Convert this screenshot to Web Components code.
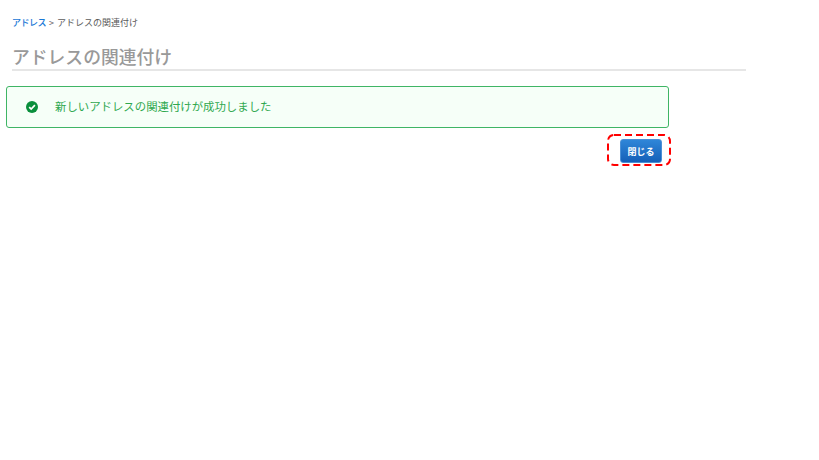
<!DOCTYPE html>
<html lang="ja">
<head>
<meta charset="utf-8">
<title>アドレスの関連付け</title>
<style>
    html, body { margin: 0; padding: 0; background: #fff; }
    body { font-family: "Noto Sans CJK JP", "Liberation Sans", sans-serif; }
</style>
</head>
<body>
<assoc-page>
    <page-crumbs current="アドレスの関連付け">アドレス</page-crumbs>
    <page-title>アドレスの関連付け</page-title>
    <success-alert>新しいアドレスの関連付けが成功しました</success-alert>
    <close-action>閉じる</close-action>
</assoc-page>
<script>
class AssocPage extends HTMLElement {
    connectedCallback() {
        this.attachShadow({ mode: 'open' });
        this.shadowRoot.innerHTML = `
            <style>
                :host {
                    display: block;
                    width: 819px;
                    height: 460px;
                    box-sizing: border-box;
                    padding-top: 16px;
                    overflow: hidden;
                }
            </style>
            <slot></slot>
        `;
    }
}

class PageCrumbs extends HTMLElement {
    connectedCallback() {
        const current = this.getAttribute('current');
        this.attachShadow({ mode: 'open' });
        this.shadowRoot.innerHTML = `
            <style>
                :host {
                    display: block;
                    margin-left: 12px;
                    height: 14px;
                    font-size: 9px;
                    line-height: 14px;
                    color: #5c5c5c;
                }
                a {
                    color: #1a78d6;
                    font-weight: 500;
                    letter-spacing: -0.5px;
                    text-decoration: none;
                }
                span {
                    margin: 0 3px;
                }
            </style>
            <a href="#"><slot></slot></a><span>&gt;</span>${current}
        `;
    }
}

class PageTitle extends HTMLElement {
    connectedCallback() {
        this.attachShadow({ mode: 'open' });
        this.shadowRoot.innerHTML = `
            <style>
                :host {
                    display: block;
                    box-sizing: border-box;
                    width: 734px;
                    height: 41px;
                    margin-left: 12px;
                    padding-top: 13px;
                    border-bottom: 2px solid #e6e6e6;
                    font-size: 17.8px;
                    font-weight: 500;
                    line-height: 26px;
                    color: #999;
                }
            </style>
            <slot></slot>
        `;
    }
}

class SuccessAlert extends HTMLElement {
    connectedCallback() {
        this.attachShadow({ mode: 'open' });
        this.shadowRoot.innerHTML = `
            <style>
                :host {
                    display: flex;
                    align-items: center;
                    box-sizing: border-box;
                    width: 663px;
                    height: 42px;
                    margin: 15px 0 0 6px;
                    padding-left: 19px;
                    border: 1px solid #3fb565;
                    border-radius: 3px;
                    background: #f6fff8;
                    font-size: 11.4px;
                    line-height: 16px;
                    color: #2fa84f;
                }
                svg {
                    width: 12px;
                    height: 12px;
                    margin-right: 17px;
                    flex: none;
                }
                span {
                    position: relative;
                    top: -1px;
                }
            </style>
            <svg viewBox="0 0 12 12">
                <circle cx="6" cy="6" r="6" fill="#0a8f3c"/>
                <path d="M3.2 6.1 5.2 8.1 8.9 4.2" fill="none" stroke="#fff" stroke-width="1.7"/>
            </svg>
            <span><slot></slot></span>
        `;
    }
}

class CloseAction extends HTMLElement {
    connectedCallback() {
        this.attachShadow({ mode: 'open' });
        this.shadowRoot.innerHTML = `
            <style>
                :host {
                    display: flex;
                    justify-content: flex-end;
                    width: 671px;
                    margin-top: 6px;
                }
                .mark {
                    position: relative;
                    display: flex;
                    box-sizing: border-box;
                    width: 64px;
                    height: 32px;
                    padding: 5px 9px 0 13px;
                }
                svg {
                    position: absolute;
                    inset: 0;
                    width: 64px;
                    height: 32px;
                }
                button {
                    width: 42px;
                    height: 24px;
                    margin: 0;
                    padding: 0;
                    border: 1px solid #4b90d6;
                    border-radius: 3px;
                    background: linear-gradient(#2f86d8, #1560b8);
                    color: #fff;
                    font: 700 9px "Noto Sans CJK JP", sans-serif;
                }
            </style>
            <div class="mark">
                <svg viewBox="0 0 64 32">
                    <rect x="1" y="1" width="62" height="30" rx="6" fill="none" stroke="#f00" stroke-width="2" stroke-dasharray="7 4"/>
                </svg>
                <button><slot></slot></button>
            </div>
        `;
    }
}

customElements.define('assoc-page', AssocPage);
customElements.define('page-crumbs', PageCrumbs);
customElements.define('page-title', PageTitle);
customElements.define('success-alert', SuccessAlert);
customElements.define('close-action', CloseAction);
</script>
</body>
</html>
